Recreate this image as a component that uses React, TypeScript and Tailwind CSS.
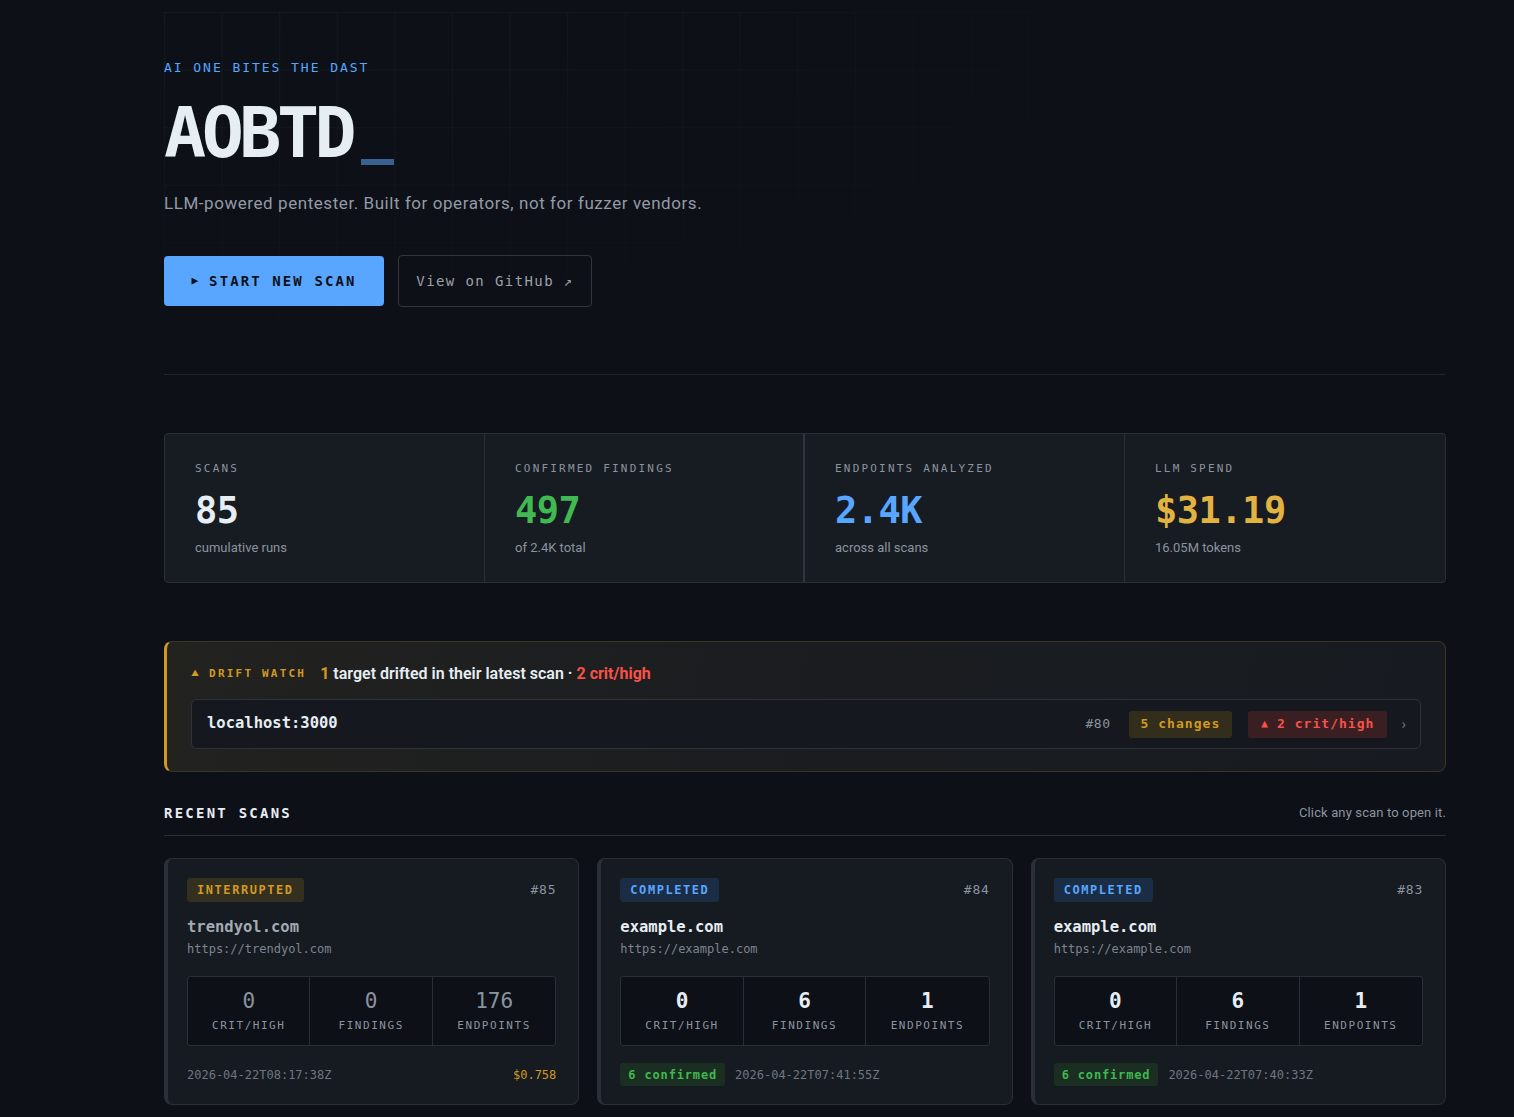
import React from "react";

const mono = "font-['DejaVu_Sans_Mono',monospace]";
const sans = "font-['Roboto','Inter',sans-serif]";

type Scan = {
  status: "INTERRUPTED" | "COMPLETED";
  id: string;
  domain: string;
  url: string;
  crit: string;
  findings: string;
  endpoints: string;
  date: string;
  cost?: string;
  confirmed?: string;
};

const scans: Scan[] = [
  {
    status: "INTERRUPTED",
    id: "#85",
    domain: "trendyol.com",
    url: "https://trendyol.com",
    crit: "0",
    findings: "0",
    endpoints: "176",
    date: "2026-04-22T08:17:38Z",
    cost: "$0.758",
  },
  {
    status: "COMPLETED",
    id: "#84",
    domain: "example.com",
    url: "https://example.com",
    crit: "0",
    findings: "6",
    endpoints: "1",
    date: "2026-04-22T07:41:55Z",
    confirmed: "6 confirmed",
  },
  {
    status: "COMPLETED",
    id: "#83",
    domain: "example.com",
    url: "https://example.com",
    crit: "0",
    findings: "6",
    endpoints: "1",
    date: "2026-04-22T07:40:33Z",
    confirmed: "6 confirmed",
  },
];

function Stat({
  label,
  value,
  sub,
  color,
  border,
}: {
  label: string;
  value: string;
  sub: string;
  color: string;
  border: string;
}) {
  return (
    <div className={`flex flex-col pl-[30px] pt-[27px] pb-[25px] ${border}`}>
      <div className={`${mono} text-[11px] leading-[16px] tracking-[0.2em] text-[#8b949e]`}>{label}</div>
      <div className={`${mono} mt-[15px] text-[37px] leading-[37px] font-bold tracking-[-0.5px] ${color}`}>{value}</div>
      <div className={`${sans} mt-[10px] text-[13px] leading-[18px] text-[#8b949e]`}>{sub}</div>
    </div>
  );
}

function ScanCard({ s }: { s: Scan }) {
  const dim = s.status === "INTERRUPTED";
  const numColor = dim ? "text-[#8b949e] font-normal" : "text-[#e6edf3] font-bold";
  return (
    <div className="flex flex-col rounded-[8px] border border-[#2a2f37] border-l-[4px] border-l-[#2b3038] bg-[#161a21] pl-[19px] pr-[22px] pt-[19px] pb-[18px]">
      <div className="flex items-center justify-between">
        <span
          className={`${mono} rounded-[3px] px-[10px] h-[24px] flex items-center text-[12px] font-bold tracking-[0.13em] ${
            dim ? "bg-[#33301f] text-[#d29922]" : "bg-[#1b2d45] text-[#58a6ff]"
          }`}
        >
          {s.status}
        </span>
        <span className={`${mono} text-[13px] tracking-[0.06em] text-[#8b949e]`}>{s.id}</span>
      </div>
      <div
        className={`${mono} mt-[14px] text-[15.5px] leading-[22px] font-bold ${dim ? "text-[#a3aab3]" : "text-[#e6edf3]"}`}
      >
        {s.domain}
      </div>
      <div className={`${mono} mt-[3px] text-[12px] leading-[16px] text-[#7d858f]`}>{s.url}</div>
      <div className="mt-[19px] grid grid-cols-3 rounded-[3px] border border-[#2a2f37] bg-[#0d1017] h-[70px]">
        {[
          [s.crit, "CRIT/HIGH"],
          [s.findings, "FINDINGS"],
          [s.endpoints, "ENDPOINTS"],
        ].map(([n, l], i) => (
          <div
            key={l}
            className={`flex flex-col items-center justify-center ${i < 2 ? "border-r border-[#2a2f37]" : ""}`}
          >
            <div className={`${mono} text-[21px] leading-[24px] ${numColor}`}>{n}</div>
            <div className={`${mono} mt-[5px] text-[11px] leading-[16px] tracking-[0.14em] text-[#8b949e]`}>{l}</div>
          </div>
        ))}
      </div>
      <div className="mt-[17px] flex items-center h-[23px]">
        {s.confirmed ? (
          <>
            <span
              className={`${mono} rounded-[3px] bg-[#1a2e22] px-[8px] h-[23px] flex items-center text-[12px] font-bold tracking-[0.07em] text-[#3fb950]`}
            >
              {s.confirmed}
            </span>
            <span className={`${mono} ml-[10px] text-[12px] text-[#6e7681]`}>{s.date}</span>
          </>
        ) : (
          <div className="flex w-full items-center justify-between">
            <span className={`${mono} text-[12px] text-[#6e7681]`}>{s.date}</span>
            <span className={`${mono} text-[12px] text-[#d29922]`}>{s.cost}</span>
          </div>
        )}
      </div>
    </div>
  );
}

export default function App() {
  return (
    <div className={`min-h-screen bg-[#0d1017] ${sans}`}>
      <div className="pl-[164px] pr-[68px] pt-[12px] pb-[13px]">
        <section className="pt-[46px] pb-[67px] border-b border-[#21262d] bg-[radial-gradient(ellipse_85%_100%_at_0%_0%,rgba(13,16,23,0)_0%,rgba(13,16,23,0.5)_55%,#0d1017_100%),linear-gradient(to_right,rgba(255,255,255,0.035)_1px,transparent_1px),linear-gradient(to_bottom,rgba(255,255,255,0.035)_1px,transparent_1px)] [background-size:100%_100%,57.6px_57.6px,57.6px_57.6px]">
          <div className={`${mono} text-[13px] leading-[20px] tracking-[0.15em] text-[#58a6ff]`}>
            AI ONE BITES THE DAST
          </div>
          <div className="mt-[20px] flex items-end">
            <h1 className={`${mono} text-[70px] leading-[70px] font-bold tracking-[-4.5px] text-[#e6edf3]`}>AOBTD</h1>
            <span className="ml-[9px] mb-[3px] h-[6px] w-[33px] bg-[#38618f]" />
          </div>
          <p className={`${sans} mt-[22px] text-[17px] leading-[26px] tracking-[0.033em] text-[#939ba6]`}>
            LLM-powered pentester. Built for operators, not for fuzzer vendors.
          </p>
          <div className="mt-[39px] flex items-center gap-[14px]">
            <button
              className={`${mono} flex h-[50px] w-[220px] items-center justify-center gap-[11px] rounded-[4px] bg-[#58a6ff] text-[14px] font-bold tracking-[0.15em] text-[#0d1117]`}
            >
              <span className="text-[11px] tracking-normal">▶</span>
              <span>START NEW SCAN</span>
            </button>
            <button
              className={`${mono} flex h-[52px] w-[194px] items-center justify-center rounded-[4px] border border-[#30363d] text-[14px] tracking-[0.1em] text-[#9aa1ab]`}
            >
              View on GitHub ↗
            </button>
          </div>
        </section>

        <div className="mt-[58px] grid grid-cols-4 rounded-[4px] border border-[#2a2f37] bg-[#171b22]">
          <Stat label="SCANS" value="85" sub="cumulative runs" color="text-[#e6edf3]" border="border-r border-[#2a2f37]" />
          <Stat label="CONFIRMED FINDINGS" value="497" sub="of 2.4K total" color="text-[#3fb950]" border="border-r-2 border-[#30353d]" />
          <Stat label="ENDPOINTS ANALYZED" value="2.4K" sub="across all scans" color="text-[#58a6ff]" border="border-r border-[#2a2f37]" />
          <Stat label="LLM SPEND" value="$31.19" sub="16.05M tokens" color="text-[#e3b341]" border="" />
        </div>

        <div className="mt-[58px] rounded-[8px] border border-[#3a3524] border-l-[3px] border-l-[#d29922] bg-[linear-gradient(100deg,#22221f_0%,#1b1d20_45%,#171b21_100%)] pl-[24px] pr-[24px] pt-[21px] pb-[22px]">
          <div className="flex items-center h-[22px]">
            <span className="text-[8px] text-[#d29922]">▲</span>
            <span className={`${mono} ml-[10px] text-[11px] font-bold tracking-[0.2em] text-[#d29922]`}>DRIFT WATCH</span>
            <span className={`${sans} ml-[14px] text-[16px] font-bold text-[#d29922]`}>1</span>
            <span className={`${sans} ml-[4px] text-[16px] font-semibold text-[#e6edf3]`}>
              target drifted in their latest scan ·
            </span>
            <span className={`${sans} ml-[4px] text-[16px] font-bold text-[#f85149]`}>2 crit/high</span>
          </div>
          <div className="mt-[14px] flex h-[50px] items-center rounded-[6px] border border-[#2e333b] bg-[#15181e] pl-[15px] pr-[14px]">
            <span className={`${mono} text-[15.5px] font-bold text-[#e6edf3]`}>localhost:3000</span>
            <span className={`${mono} ml-auto text-[13px] tracking-[0.04em] text-[#8b949e]`}>#80</span>
            <span
              className={`${mono} ml-[18px] flex h-[27px] items-center rounded-[3px] bg-[#332d1b] px-[12px] text-[13px] font-bold tracking-[0.08em] text-[#d29922]`}
            >
              5 changes
            </span>
            <span
              className={`${mono} ml-[16px] flex h-[27px] items-center gap-[9px] rounded-[3px] bg-[#3a1f22] px-[13px] text-[13px] font-bold tracking-[0.08em] text-[#f85149]`}
            >
              <span className="text-[11px] tracking-normal">▲</span>2 crit/high
            </span>
            <span className="ml-[14px] text-[15px] text-[#6e7681]">›</span>
          </div>
        </div>

        <div className="mt-[31px] flex items-center justify-between border-b border-[#2a2f37] pb-[12px]">
          <span className={`${mono} text-[14px] leading-[20px] font-bold tracking-[0.16em] text-[#e6edf3]`}>RECENT SCANS</span>
          <span className={`${sans} text-[13px] tracking-[0.01em] text-[#8b949e]`}>Click any scan to open it.</span>
        </div>

        <div className="mt-[22px] grid grid-cols-3 gap-[18px]">
          {scans.map((s) => (
            <ScanCard key={s.id} s={s} />
          ))}
        </div>
      </div>
    </div>
  );
}
